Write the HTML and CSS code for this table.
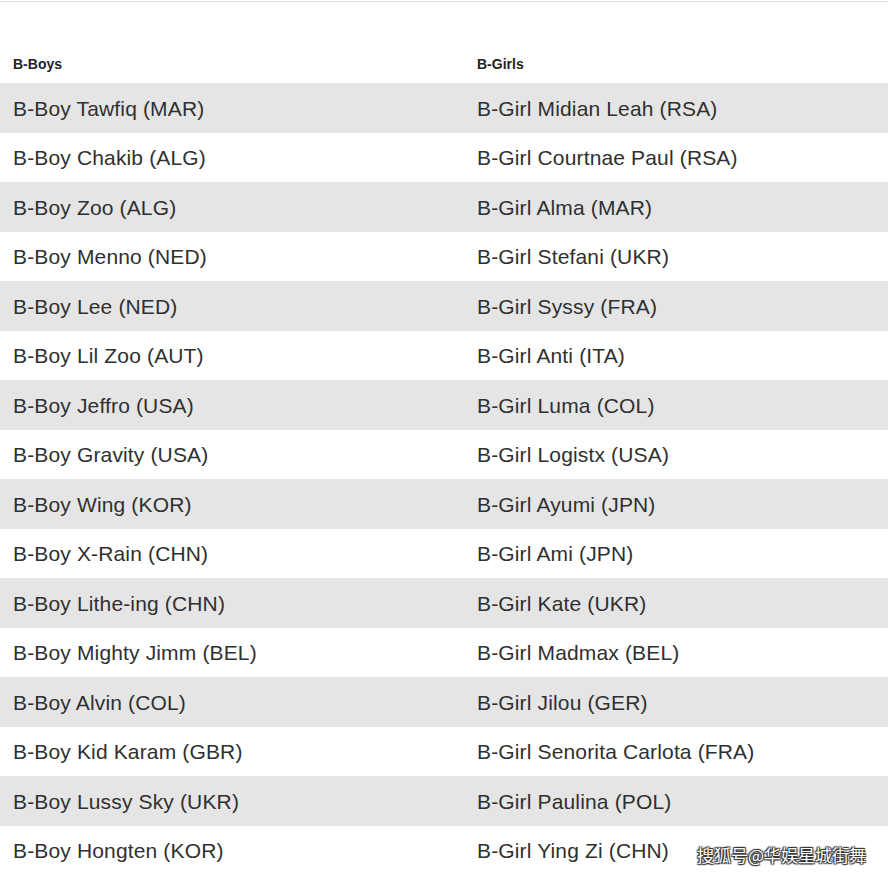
FILE: index.html
```html
<!DOCTYPE html>
<html lang="en">
<head>
<meta charset="utf-8">
<title>B-Boys and B-Girls</title>
<link rel="stylesheet" href="styles.css">
</head>
<body>
<div class="page">
  <div class="topline"></div>
  <div class="table">
    <div class="head">B-Boys</div>
    <div class="head">B-Girls</div>

    <div class="cell odd">B-Boy Tawfiq (MAR)</div><div class="cell odd">B-Girl Midian Leah (RSA)</div>
    <div class="cell">B-Boy Chakib (ALG)</div><div class="cell">B-Girl Courtnae Paul (RSA)</div>
    <div class="cell odd">B-Boy Zoo (ALG)</div><div class="cell odd">B-Girl Alma (MAR)</div>
    <div class="cell">B-Boy Menno (NED)</div><div class="cell">B-Girl Stefani (UKR)</div>
    <div class="cell odd">B-Boy Lee (NED)</div><div class="cell odd">B-Girl Syssy (FRA)</div>
    <div class="cell">B-Boy Lil Zoo (AUT)</div><div class="cell">B-Girl Anti (ITA)</div>
    <div class="cell odd">B-Boy Jeffro (USA)</div><div class="cell odd">B-Girl Luma (COL)</div>
    <div class="cell">B-Boy Gravity (USA)</div><div class="cell">B-Girl Logistx (USA)</div>
    <div class="cell odd">B-Boy Wing (KOR)</div><div class="cell odd">B-Girl Ayumi (JPN)</div>
    <div class="cell">B-Boy X-Rain (CHN)</div><div class="cell">B-Girl Ami (JPN)</div>
    <div class="cell odd">B-Boy Lithe-ing (CHN)</div><div class="cell odd">B-Girl Kate (UKR)</div>
    <div class="cell">B-Boy Mighty Jimm (BEL)</div><div class="cell">B-Girl Madmax (BEL)</div>
    <div class="cell odd">B-Boy Alvin (COL)</div><div class="cell odd">B-Girl Jilou (GER)</div>
    <div class="cell">B-Boy Kid Karam (GBR)</div><div class="cell">B-Girl Senorita Carlota (FRA)</div>
    <div class="cell odd">B-Boy Lussy Sky (UKR)</div><div class="cell odd">B-Girl Paulina (POL)</div>
    <div class="cell">B-Boy Hongten (KOR)</div><div class="cell">B-Girl Ying Zi (CHN)</div>
  </div>
  <div class="watermark">搜狐号@华娱星城街舞</div>
</div>
</body>
</html>
```

FILE: styles.css
```css
html, body {
  margin: 0;
  padding: 0;
  background: #ffffff;
}

.page {
  position: relative;
  width: 888px;
  height: 875px;
  overflow: hidden;
  font-family: "Liberation Sans", Arial, sans-serif;
}

.topline {
  margin-top: 1px;
  height: 1px;
  background: #dedede;
}

.table {
  display: grid;
  grid-template-columns: 464px 424px;
  grid-template-rows: 81px;
  grid-auto-rows: 49.5px;
}

.head {
  grid-row: 1;
  box-sizing: border-box;
  display: flex;
  align-items: flex-end;
  padding: 0 0 11px 13px;
  font-size: 14px;
  font-weight: 700;
  color: #222222;
}

.cell {
  display: flex;
  align-items: center;
  padding: 2px 0 0 13px;
  font-size: 21px;
  letter-spacing: 0.15px;
  color: #303030;
  white-space: nowrap;
}

.cell.odd {
  background: #e5e5e5;
}

.watermark {
  position: absolute;
  left: 697px;
  top: 843px;
  font-family: "Noto Sans CJK SC", sans-serif;
  font-size: 17px;
  line-height: 24px;
  color: #ffffff;
  text-shadow: 0 0 1px #333, 1px 1px 1px #333, -1px -1px 1px #333, 1px -1px 1px #333, -1px 1px 1px #333;
}
```
